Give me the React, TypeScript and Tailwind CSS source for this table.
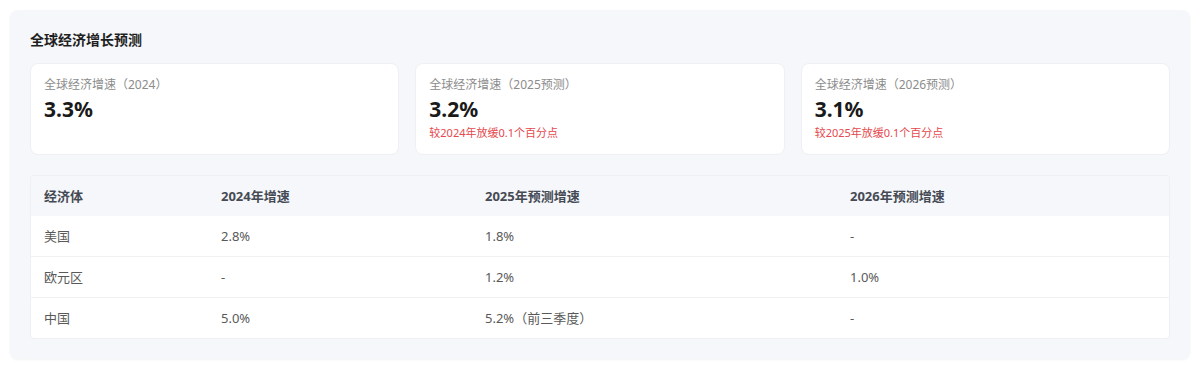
const cards = [
  { label: "全球经济增速（2024）", value: "3.3%", note: "" },
  { label: "全球经济增速（2025预测）", value: "3.2%", note: "较2024年放缓0.1个百分点" },
  { label: "全球经济增速（2026预测）", value: "3.1%", note: "较2025年放缓0.1个百分点" },
];

const rows = [
  ["美国", "2.8%", "1.8%", "-"],
  ["欧元区", "-", "1.2%", "1.0%"],
  ["中国", "5.0%", "5.2%（前三季度）", "-"],
];

const headers = ["经济体", "2024年增速", "2025年预测增速", "2026年预测增速"];

export default function App() {
  return (
    <div
      className="bg-white p-[10px] w-[1200px] h-[374px]"
      style={{ fontFamily: '"Noto Sans", "Noto Sans CJK SC", sans-serif' }}
    >
      <div className="bg-[#f5f7fa] rounded-lg shadow-[0_1px_3px_rgba(0,0,0,0.05)] px-5 pt-5 pb-5">
        <h2 className="text-[14px] leading-[20px] font-bold text-[#1f1f1f] mb-[13px]">全球经济增长预测</h2>

        {/* Cards */}
        <div className="grid grid-cols-3 gap-4">
          {cards.map((c) => (
            <div
              key={c.label}
              className="bg-white rounded-lg border border-[#eef0f3] px-[13px] py-[13px]"
            >
              <div className="text-[12px] leading-[16px] text-[#8c8c8c]">{c.label}</div>
              <div className="text-[21px] leading-[32px] font-bold text-[#1a1a1a]">{c.value}</div>
              {c.note && <div className="text-[11px] leading-[16px] text-[#e5484d]">{c.note}</div>}
            </div>
          ))}
        </div>

        {/* Table */}
        <div className="mt-5 bg-white rounded-sm border border-[#eef0f3] overflow-hidden">
          <table className="w-full text-left">
            <thead>
              <tr className="bg-[#f5f7fa]">
                {headers.map((h, i) => (
                  <th
                    key={h}
                    className={`py-3 px-[13px] text-[13px] leading-[16px] font-bold text-[#454a54] ${
                      i === 0 ? "w-[177px]" : i === 1 ? "w-[264px]" : i === 2 ? "w-[365px]" : ""
                    }`}
                  >
                    {h}
                  </th>
                ))}
              </tr>
            </thead>
            <tbody>
              {rows.map((r, ri) => (
                <tr key={ri} className={ri > 0 ? "border-t border-[#f0f1f3]" : ""}>
                  {r.map((cell, ci) => (
                    <td key={ci} className="py-3 px-[13px] text-[13px] leading-[16px] text-[#595959]">
                      {cell}
                    </td>
                  ))}
                </tr>
              ))}
            </tbody>
          </table>
        </div>
      </div>
    </div>
  );
}
